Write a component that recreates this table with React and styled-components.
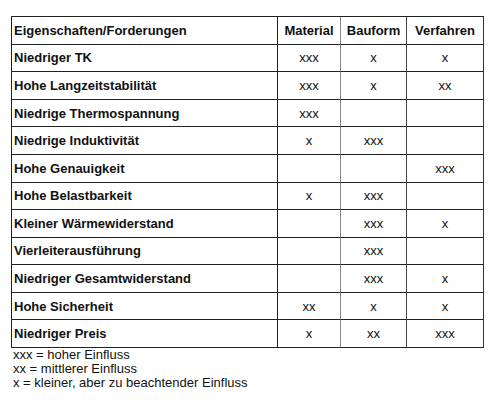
import { Fragment } from "react"
import styled, { createGlobalStyle } from "styled-components"

const GlobalStyle = createGlobalStyle`
  html, body {
    margin: 0;
    padding: 0;
    background: #ffffff;
  }
  body {
    font-family: "Liberation Sans", Arial, sans-serif;
    color: #111;
  }
`

const zeilen = [
  ["Niedriger TK", "xxx", "x", "x"],
  ["Hohe Langzeitstabilität", "xxx", "x", "xx"],
  ["Niedrige Thermospannung", "xxx", "", ""],
  ["Niedrige Induktivität", "x", "xxx", ""],
  ["Hohe Genauigkeit", "", "", "xxx"],
  ["Hohe Belastbarkeit", "x", "xxx", ""],
  ["Kleiner Wärmewiderstand", "", "xxx", "x"],
  ["Vierleiterausführung", "", "xxx", ""],
  ["Niedriger Gesamtwiderstand", "", "xxx", "x"],
  ["Hohe Sicherheit", "xx", "x", "x"],
  ["Niedriger Preis", "x", "xx", "xxx"],
]

export default function App() {
  return (
    <Seite>
      <GlobalStyle />
      <Tabelle>
        <Zelle $kopf>Eigenschaften/Forderungen</Zelle>
        <Zelle $kopf $mitte>Material</Zelle>
        <Zelle $kopf $mitte $grau>Bauform</Zelle>
        <Zelle $kopf $mitte>Verfahren</Zelle>
        {zeilen.map(([name, material, bauform, verfahren]) => (
          <Fragment key={name}>
            <Zelle $kopf>{name}</Zelle>
            <Zelle $mitte>{material}</Zelle>
            <Zelle $mitte $grau>{bauform}</Zelle>
            <Zelle $mitte>{verfahren}</Zelle>
          </Fragment>
        ))}
      </Tabelle>
      <Legende>
        <p>xxx = hoher Einfluss</p>
        <p>xx = mittlerer Einfluss</p>
        <p>x = kleiner, aber zu beachtender Einfluss</p>
      </Legende>
    </Seite>
  )
}

const Seite = styled.div`
  width: 500px;
  height: 400px;
  padding: 16px 0 0 11px;
  box-sizing: border-box;
`

const Tabelle = styled.div`
  display: grid;
  grid-template-columns: 266px 63px 66px 77px;
  grid-template-rows: repeat(12, 1fr);
  width: 473px;
  height: 332px;
  box-sizing: border-box;
  border-top: 1px solid #222;
  border-left: 1px solid #222;
`

const Zelle = styled.div`
  display: flex;
  align-items: center;
  justify-content: ${(p) => (p.$mitte ? "center" : "flex-start")};
  padding-left: ${(p) => (p.$mitte ? "0" : "2px")};
  font-size: 13px;
  font-weight: ${(p) => (p.$kopf ? "bold" : "normal")};
  border-right: 1px solid ${(p) => (p.$grau ? "#444" : "#888")};
  border-bottom: 1px solid #222;
  white-space: nowrap;
  overflow: hidden;

  &:nth-child(4n + 1) {
    border-right-color: #222;
  }
  &:nth-child(4n) {
    border-right-color: #333;
  }
`

const Legende = styled.div`
  padding: 0 0 0 2px;
  font-size: 13px;
  line-height: 14px;

  p {
    margin: 0;
  }
`
